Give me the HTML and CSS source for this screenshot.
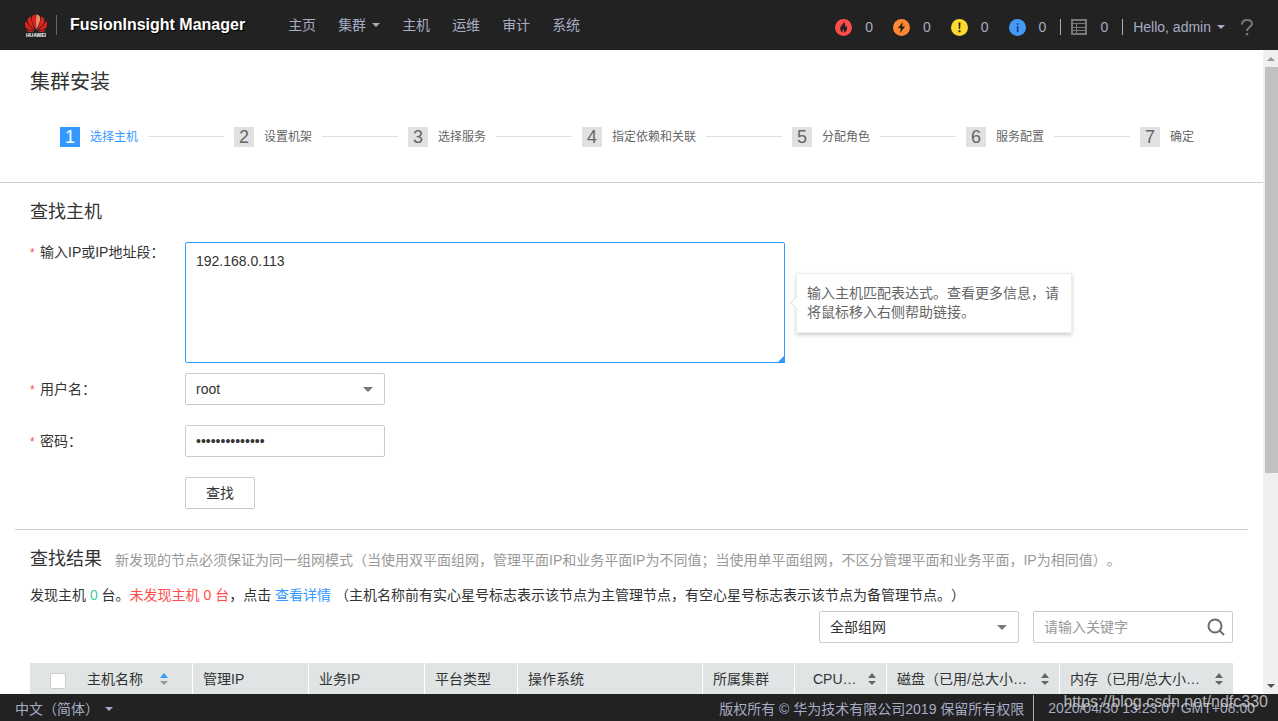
FILE: index.html
```html
<!DOCTYPE html>
<html lang="zh-CN">
<head>
<meta charset="utf-8">
<title>FusionInsight Manager</title>
<link rel="stylesheet" href="styles.css">
</head>
<body>
<header class="topbar">
  <div class="brand">
    <svg class="logo" width="24" height="24" viewBox="0 0 24 24" role="img" aria-label="Huawei">
      <g fill="#e0221e">
        <path d="M11.800 15.600C9.500 11.500 7.500 7.500 7.800 4 8 2 9.600.6 11.700.5c.3 4 .4 10 .1 15.100z"/>
        <path d="M12.200 15.600C14.500 11.500 16.500 7.500 16.200 4 16 2 14.400.6 12.300.5c-.3 4-.4 10-.1 15.100z" fill="#ee8a62"/>
        <path d="M11 15.900C6.500 13 3.300 9.500 3.700 6 4 4.200 5.200 3.100 6.900 2.600c.3 4.800 2 9.500 4.100 13.300z"/>
        <path d="M13 15.900c4.500-2.900 7.700-6.400 7.300-9.900-.3-1.800-1.500-2.900-3.200-3.400-.3 4.800-2 9.500-4.100 13.300z"/>
        <path d="M10.500 16.400C5.500 16.400 1.700 14.800 1 11.500c-.4-1.900.2-3.300 1.300-4.300C3.800 11.200 7 14.200 10.500 16.400z"/>
        <path d="M13.500 16.400c5 0 8.800-1.600 9.500-4.900.4-1.900-.2-3.300-1.300-4.300C20.200 11.200 17 14.200 13.500 16.400z"/>
        <path d="M10.300 16.900c-3.300 1.600-6.600 1.700-8.100-1.100 2.500.9 5.600 1.200 8.100 1.100z"/>
        <path d="M13.700 16.900c3.300 1.600 6.600 1.700 8.100-1.100-2.500.9-5.600 1.200-8.100 1.100z"/>
      </g>
      <text x="12" y="23" class="logo-text" text-anchor="middle">HUAWEI</text>
    </svg>
    <span class="brand-name">FusionInsight Manager</span>
  </div>
  <nav class="nav">
    <a href="#">主页</a>
    <a href="#">集群<span class="caret"></span></a>
    <a href="#">主机</a>
    <a href="#">运维</a>
    <a href="#">审计</a>
    <a href="#">系统</a>
  </nav>
  <div class="status">
    <a href="#" class="alarm">
      <svg width="17" height="17" viewBox="0 0 17 17"><circle cx="8.500" cy="8.500" r="8.500" fill="#ff4c4c"/><path d="M9 2.500c.3 2-3.800 4-3.800 7.200 0 1.900 1.200 3.400 2.900 3.800-.9-1.200-.7-2.300.5-3.500.1 1 .9 1.600.2 3.500 2-.5 3.300-2 3.300-4 0-1.500-.7-2.600-1.300-3.300-.1 1-.4 1.500-1 1.800C10.200 6.200 10.200 4 9 2.500z" fill="#222"/></svg>
      <span>0</span></a>
    <a href="#" class="alarm">
      <svg width="17" height="17" viewBox="0 0 17 17"><circle cx="8.500" cy="8.500" r="8.500" fill="#ff8833"/><path d="M9.800 3L4.800 9.200h3L7 14l5.200-6.500H9.200z" fill="#222"/></svg>
      <span>0</span></a>
    <a href="#" class="alarm">
      <svg width="17" height="17" viewBox="0 0 17 17"><circle cx="8.500" cy="8.500" r="8.500" fill="#ffd82e"/><path d="M7.500 3.500h2l-.4 6.500H7.900zM7.500 11.300h2v2h-2z" fill="#222"/></svg>
      <span>0</span></a>
    <a href="#" class="alarm">
      <svg width="17" height="17" viewBox="0 0 17 17"><circle cx="8.500" cy="8.500" r="8.500" fill="#4499f5"/><path d="M7.800 4.200h1.600v1.600H7.800zM7.800 7h1.600v6H7.800z" fill="#23318c"/></svg>
      <span>0</span></a>
    <a href="#" class="tasks">
      <svg width="16" height="16" viewBox="0 0 16 16" fill="none" stroke="#777"><path d="M1 1h14v14H1z" stroke-width="2"/><path d="M2 4.500h12M2 8.500h12M2 11.500h12M5.500 4.500V14"/></svg>
      <span>0</span></a>
    <a href="#" class="user">Hello, admin<span class="caret"></span></a>
    <a href="#" class="help" aria-label="Help">
      <svg width="12" height="17" viewBox="0 0 12 17" fill="none" stroke="#777" stroke-width="2"><path d="M1 5.500C1 2.500 3 1 6 1s5 1.500 5 3.800C11 8 6 8 6 12"/><path d="M6 14v2.300" stroke-width="2.500"/></svg>
    </a>
  </div>
</header>

<div class="viewport">
  <main class="content">
    <section class="intro">
      <h1>集群安装</h1>
      <ol class="steps">
        <li class="step current"><span class="num">1</span>选择主机</li>
        <li class="step"><span class="num">2</span>设置机架</li>
        <li class="step"><span class="num">3</span>选择服务</li>
        <li class="step"><span class="num">4</span>指定依赖和关联</li>
        <li class="step"><span class="num">5</span>分配角色</li>
        <li class="step"><span class="num">6</span>服务配置</li>
        <li class="step"><span class="num">7</span>确定</li>
      </ol>
    </section>

    <section class="panel">
      <h2>查找主机</h2>
      <form class="form">
        <label for="ip" class="label-top"><i>*</i>输入IP或IP地址段：</label>
        <div class="ip-row">
          <div class="area"><textarea id="ip" spellcheck="false">192.168.0.113</textarea></div>
          <div class="tip" role="note">输入主机匹配表达式。查看更多信息，请将鼠标移入右侧帮助链接。</div>
        </div>
        <label for="user"><i>*</i>用户名：</label>
        <select id="user" class="field select"><option>root</option></select>
        <label for="pwd"><i>*</i>密码：</label>
        <input id="pwd" class="field" type="password" value="abcdefghijklmn">
        <button type="button" class="btn">查找</button>
      </form>
    </section>

    <section class="panel results">
      <div class="results-head">
        <h2>查找结果</h2>
        <p class="note">新发现的节点必须保证为同一组网模式（当使用双平面组网，管理平面IP和业务平面IP为不同值；当使用单平面组网，不区分管理平面和业务平面，IP为相同值）。</p>
      </div>
      <p class="summary">发现主机 <span class="ok">0</span> 台。<span class="bad">未发现主机 0 台</span>，点击 <a href="#">查看详情</a> （主机名称前有实心星号标志表示该节点为主管理节点，有空心星号标志表示该节点为备管理节点。）</p>
      <div class="filters">
        <select class="field select" aria-label="组网"><option>全部组网</option></select>
        <div class="search">
          <input class="field" type="text" placeholder="请输入关键字" aria-label="请输入关键字">
          <button type="button" class="search-btn" aria-label="搜索"><svg width="18" height="18" viewBox="0 0 18 18" fill="none" stroke="#6a6a6a" stroke-width="2"><circle cx="8" cy="8" r="6.500"/><path d="M12.500 12.500L17 17"/></svg></button>
        </div>
      </div>
      <table class="hosts">
        <colgroup><col class="c-name"><col class="c-ip"><col class="c-ip"><col class="c-type"><col class="c-os"><col class="c-small"><col class="c-small"><col class="c-size"><col class="c-size"></colgroup>
        <thead>
          <tr>
            <th><div class="cell"><input type="checkbox" aria-label="全选"><span class="text">主机名称</span><svg class="sort" width="8" height="14" viewBox="0 0 8 14"><path d="M0 6l4-5 4 5z" fill="#3399ff"/><path d="M0 9h8l-4 4z" fill="#999"/></svg></div></th>
            <th>管理IP</th>
            <th>业务IP</th>
            <th>平台类型</th>
            <th>操作系统</th>
            <th>所属集群</th>
            <th><div class="cell indent"><span class="text grow">CPU…</span><svg class="sort" width="8" height="14" viewBox="0 0 8 14" fill="#666"><path d="M0 6l4-5 4 5z"/><path d="M0 9h8l-4 4z"/></svg></div></th>
            <th><div class="cell"><span class="text grow">磁盘（已用/总大小…</span><svg class="sort" width="8" height="14" viewBox="0 0 8 14" fill="#666"><path d="M0 6l4-5 4 5z"/><path d="M0 9h8l-4 4z"/></svg></div></th>
            <th><div class="cell"><span class="text grow">内存（已用/总大小…</span><svg class="sort" width="8" height="14" viewBox="0 0 8 14" fill="#666"><path d="M0 6l4-5 4 5z"/><path d="M0 9h8l-4 4z"/></svg></div></th>
          </tr>
        </thead>
      </table>
    </section>
  </main>
  <div class="scrollbar" aria-hidden="true">
    <span class="arrow up"></span>
    <span class="track"><span class="thumb"></span></span>
    <span class="arrow down"></span>
  </div>
</div>

<footer class="footer">
  <a href="#" class="lang">中文（简体）<span class="caret"></span></a>
  <span class="copyright">版权所有 © 华为技术有限公司2019 保留所有权限</span>
  <time class="clock">2020/04/30 13:23:07 GMT+08:00</time>
  <span class="watermark">https://blog.csdn.net/ndfc330</span>
</footer>
</body>
</html>
```

FILE: styles.css
```css
* { box-sizing: border-box; }

body {
  margin: 0;
  height: 100vh;
  display: flex;
  flex-direction: column;
  overflow: hidden;
  background: #fff;
  color: #333;
  font: 14px/20px "Liberation Sans", Arial, "Noto Sans CJK SC", sans-serif;
  text-spacing-trim: space-all;
}

h1, h2, p, ol { margin: 0; padding: 0; font-weight: 400; }
a { color: inherit; text-decoration: none; }
input, select, textarea, button { font: inherit; color: inherit; margin: 0; }

.caret {
  border: 4px solid transparent;
  border-top-color: currentColor;
  border-bottom: 0;
  margin-left: 6px;
}

/* top bar */
.topbar {
  flex: none;
  height: 50px;
  display: flex;
  align-items: center;
  padding: 0 25px 0 24px;
  background: #222;
  color: #a7acc4;
}
.brand { display: flex; align-items: center; }
.logo { margin-top: 2px; }
.logo-text { font: bold 5px "Liberation Sans", Arial, sans-serif; fill: #fff; }
.brand-name {
  margin-left: 8px;
  padding-left: 13px;
  border-left: 1px solid #666;
  color: #fff;
  font-size: 16px;
  font-weight: 700;
  text-shadow: 1px 1px 1px #000;
}
.nav { display: flex; gap: 22px; margin-left: 43px; }
.nav a, .user { display: flex; align-items: center; }
.status { display: flex; align-items: center; margin-left: auto; padding-top: 4px; }
.alarm, .tasks { display: flex; align-items: center; gap: 13px; }
.alarm { margin-right: 20px; }
.alarm:nth-child(4) { margin-right: 14px; }
.tasks, .user { height: 16px; border-left: 1px solid #a7acc4; padding-left: 10px; }
.tasks { margin-right: 14px; }
.help { display: flex; margin-left: 16px; }

/* scrolling area */
.viewport { flex: 1; min-height: 0; display: flex; }
.content { flex: 1; min-width: 0; overflow: hidden; }
.scrollbar {
  flex: none;
  width: 15px;
  display: flex;
  flex-direction: column;
  background: #f0f0f0;
}
.arrow { height: 17px; display: grid; place-items: center; }
.arrow::before { content: ""; border: 4px solid transparent; }
.up::before { border-top: 0; border-bottom-color: #999; }
.down::before { border-bottom: 0; border-top-color: #505050; }
.track { flex: 1; padding-left: 2px; }
.thumb { display: block; height: 66.5%; background: #c1c1c1; }

/* wizard */
.intro { padding: 17px 69px 35px 30px; border-bottom: 1px solid #ccc; }
h1 { font-size: 20px; line-height: 30px; }
h2 { font-size: 18px; line-height: 28px; }
.steps {
  display: flex;
  margin: 30px 0 0 30px;
  list-style: none;
  font-size: 12px;
  color: #666;
}
.step { display: flex; align-items: center; flex: 1 0 auto; gap: 10px; }
.step:last-child { flex: none; }
.step:not(:last-child)::after {
  content: "";
  flex: 1;
  height: 1px;
  margin: 0 10px 1px 0;
  background: #e0e0e0;
}
.num { width: 20px; background: #e1e1e1; font-size: 18px; text-align: center; }
.current { color: #3399ff; }
.current .num { background: #3399ff; color: #fff; }

/* search form */
.panel { margin: 0 15px; padding: 15px 15px 0; }
.form {
  display: grid;
  grid-template-columns: 155px 1fr;
  row-gap: 20px;
  align-items: center;
  justify-items: start;
  padding: 16px 0 20px;
}
.form label i { display: inline-block; width: 10px; color: #ff4c4c; font-size: 12px; font-style: normal; }
.form .label-top { align-self: start; }
.ip-row { display: flex; align-items: center; gap: 11px; margin-bottom: -10px; }
.area { position: relative; display: flex; }
.area::after {
  content: "";
  position: absolute;
  right: 0;
  bottom: 0;
  border: 4px solid #3399ff;
  border-top-color: transparent;
  border-left-color: transparent;
}
textarea {
  width: 600px;
  height: 121px;
  padding: 8px 10px;
  border: 1px solid #3399ff;
  border-radius: 2px;
  outline: 0;
  resize: none;
}
.tip {
  position: relative;
  width: 276px;
  padding: 10px;
  border: 1px solid #eee;
  box-shadow: 0 2px 4px rgba(0, 0, 0, .2);
  background: #fff;
  color: #666;
  line-height: 19px;
}
.tip::before {
  content: "";
  position: absolute;
  left: -5px;
  top: 24px;
  width: 9px;
  height: 9px;
  border: 1px solid #e4e4e4;
  border-top: 0;
  border-right: 0;
  background: #fff;
  transform: rotate(45deg);
}
.field {
  width: 200px;
  height: 32px;
  padding: 0 10px;
  border: 1px solid #ccc;
  border-radius: 2px;
  outline: 0;
  background: #fff;
}
.select {
  appearance: none;
  background: #fff url("data:image/svg+xml,%3Csvg xmlns='http://www.w3.org/2000/svg' width='10' height='5'%3E%3Cpath d='M0 0h10L5 5z' fill='%23777'/%3E%3C/svg%3E") no-repeat right 11px center;
}
.btn {
  grid-column: 2;
  width: 70px;
  height: 32px;
  padding: 0;
  border: 1px solid #ccc;
  border-radius: 2px;
  background: #fff;
}

/* results */
.results { border-top: 1px solid #ccc; }
.results-head { display: flex; align-items: center; gap: 13px; }
.note { color: #999; padding-top: 2px; white-space: nowrap; }
.summary { margin-top: 12px; white-space: nowrap; }
.summary a { color: #3399ff; }
.ok { color: #3dcca6; }
.bad { color: #ff4c4c; }
.filters { display: flex; justify-content: flex-end; gap: 14px; margin: 6px 0 20px; }
.search { position: relative; }
.search input::placeholder { color: #999; opacity: 1; }
.search-btn {
  position: absolute;
  top: 7px;
  right: 8px;
  display: flex;
  padding: 0;
  border: 0;
  background: none;
}
.hosts { width: 100%; table-layout: fixed; border-collapse: separate; border-spacing: 0; }
.hosts th {
  height: 32px;
  padding: 0 10px;
  border-right: 1px solid #fff;
  background: #e0e4e5;
  font-weight: 400;
  text-align: left;
}
.hosts th:last-child { border-right: 0; }
.c-name { width: 163px; }
.c-ip { width: 116px; }
.c-type { width: 93px; }
.c-os { width: 185px; }
.c-small { width: 92px; }
.c-size { width: 173px; }
.cell { display: flex; align-items: center; }
.cell.indent { padding-left: 8px; }
.text { overflow: hidden; text-overflow: ellipsis; white-space: nowrap; }
.grow { flex: 1; }
.sort { flex: none; margin-left: 8px; }
th:first-child .sort { margin-left: 17px; }
.hosts input {
  appearance: none;
  flex: none;
  width: 16px;
  height: 16px;
  margin: 3px 21px 0 10px;
  border: 1px solid #ccc;
  border-radius: 2px;
  background: #fff;
}

/* footer */
.footer {
  position: relative;
  flex: none;
  height: 27px;
  display: flex;
  align-items: center;
  padding: 2px 23px 0 15px;
  background: #222;
  color: #a7acc4;
}
.lang { display: flex; align-items: center; }
.copyright { margin-left: auto; padding-right: 9px; }
.clock { padding-left: 14px; border-left: 1px solid #a7acc4; line-height: 27px; }
.watermark {
  position: absolute;
  right: 10px;
  top: -2px;
  color: rgba(220, 220, 220, .8);
  font-size: 16px;
}
```
